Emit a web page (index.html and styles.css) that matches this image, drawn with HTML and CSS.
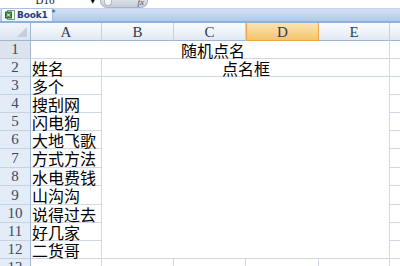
FILE: index.html
```html
<!DOCTYPE html>
<html lang="zh">
<head>
<meta charset="utf-8">
<link rel="stylesheet" href="styles.css">
</head>
<body>
<div class="app">
  <div class="fbar">
    <div class="namebox">D16</div>
    <div class="nbarrow">▼</div>
    <div class="pill"><span class="knob"></span><span class="fx">fx</span></div>
  </div>
  <div class="tabs">
    <div class="tab">
      <svg class="xlicon" width="10" height="10" viewBox="0 0 10 10">
        <rect x="2.5" y="0.5" width="7" height="9" fill="#fff" stroke="#7a9a7a"/>
        <rect x="0.5" y="2" width="6" height="6" fill="#3d8c3d" stroke="#2a6a2a"/>
        <path d="M2 3.5 L5 6.5 M5 3.5 L2 6.5" stroke="#fff" stroke-width="1"/>
      </svg>
      <span class="tabname">Book1</span><span class="star">*</span>
    </div>
  </div>
  <div class="sheet">
    <div class="corner"><span class="tri"></span></div>
    <div class="ch">A</div>
    <div class="ch">B</div>
    <div class="ch">C</div>
    <div class="ch sel">D</div>
    <div class="ch">E</div>
    <div class="ch last"></div>

    <div class="rh dark">1</div>
    <div class="c title">随机点名</div>
    <div class="c f"></div>

    <div class="rh">2</div>
    <div class="c">姓名</div>
    <div class="c hdr">点名框</div>
    <div class="c f"></div>

    <div class="rh">3</div>
    <div class="c">多个</div>
    <div class="c big"></div>
    <div class="c f"></div>

    <div class="rh">4</div>
    <div class="c">搜刮网</div>
    <div class="c f"></div>
    <div class="rh">5</div>
    <div class="c">闪电狗</div>
    <div class="c f"></div>
    <div class="rh">6</div>
    <div class="c">大地飞歌</div>
    <div class="c f"></div>
    <div class="rh">7</div>
    <div class="c">方式方法</div>
    <div class="c f"></div>
    <div class="rh">8</div>
    <div class="c">水电费钱</div>
    <div class="c f"></div>
    <div class="rh">9</div>
    <div class="c">山沟沟</div>
    <div class="c f"></div>
    <div class="rh">10</div>
    <div class="c">说得过去</div>
    <div class="c f"></div>
    <div class="rh">11</div>
    <div class="c">好几家</div>
    <div class="c f"></div>
    <div class="rh">12</div>
    <div class="c">二货哥</div>
    <div class="c f"></div>

    <div class="rh">13</div>
    <div class="c"></div>
    <div class="c"></div>
    <div class="c"></div>
    <div class="c"></div>
    <div class="c"></div>
    <div class="c f"></div>
  </div>
</div>
</body>
</html>
```

FILE: styles.css
```css
* { box-sizing: border-box; }
html, body { margin: 0; padding: 0; background: #fff; }
body { width: 400px; height: 266px; overflow: hidden; }
.app { width: 400px; height: 266px; overflow: hidden; display: flex; flex-direction: column; }
.app > * { flex: none; }

.fbar {
  height: 9px;
  display: flex;
  align-items: flex-end;
  background: #fff;
  border-bottom: 1px solid #c4d5ea;
  overflow: hidden;
}
.namebox {
  width: 90px;
  font: 11px "Liberation Serif", serif;
  color: #222;
  text-align: center;
  line-height: 11px;
  transform: translateY(-2px);
}
.nbarrow {
  font: 7px "DejaVu Sans", sans-serif;
  line-height: 7px;
  color: #000;
  width: 8px;
  margin-bottom: 3px;
}
.pill {
  margin-left: 2px;
  width: 48px;
  height: 11px;
  border-radius: 0 0 7px 7px;
  background: linear-gradient(#e6e9ee, #c5cdd7);
  border: 1px solid #a9b3c1;
  border-top: none;
  display: flex;
  justify-content: space-between;
  align-items: flex-end;
  padding: 0 3px 1px 3px;
  align-self: flex-start;
  margin-top: -3px;
}
.knob { width: 8px; height: 6px; border-radius: 0 0 4px 4px; background: #f4f6f8; border: 1px solid #b0b8c4; border-top: none; }
.fx { font: italic 9px "Liberation Serif", serif; color: #555; line-height: 8px; }

.tabs {
  height: 14px;
  background: linear-gradient(#d2e0f3, #b0c9ea);
  border-bottom: 2px solid #8eb0dc;
  display: flex;
  align-items: flex-end;
  padding-left: 1px;
}
.tab {
  height: 13px;
  width: 52px;
  background: linear-gradient(#ffffff, #eef3fa);
  border: 1px solid #a6bfe2;
  border-bottom: none;
  border-radius: 2px 2px 0 0;
  display: flex;
  align-items: center;
  padding-left: 3px;
  gap: 2px;
}
.xlicon { flex: none; }
.tabname { font: bold 9px "DejaVu Sans", sans-serif; color: #1d3f7a; letter-spacing: -0.2px; }
.star { font: 8px "DejaVu Sans", sans-serif; color: #1d3f7a; margin-left: 2px; margin-top: -3px; }

.sheet {
  display: grid;
  grid-template-columns: 31px 71px 72px 72px 73px 71px 10px;
  grid-template-rows: 18px 18px 18px 18px 18px 18px 18px 19px 18px 19px 18px 18px 18px 18px;
  font-family: "Noto Sans CJK SC", sans-serif;
}
.corner {
  background: linear-gradient(#f2f5fa, #dae3ef);
  border-right: 1px solid #9eb6ce;
  border-bottom: 1px solid #9eb6ce;
  position: relative;
}
.tri {
  position: absolute;
  right: 3px; bottom: 3px;
  width: 0; height: 0;
  border-left: 10px solid transparent;
  border-bottom: 10px solid #c3cfde;
}
.ch {
  background: linear-gradient(#f9fbfd 0%, #eef2f8 55%, #e1e8f2 100%);
  border-right: 1px solid #c5d2e2;
  border-bottom: 1px solid #9eb6ce;
  font: 15px "Liberation Serif", serif;
  color: #2d3c55;
  display: flex;
  align-items: center;
  justify-content: center;
  padding-top: 1px;
}
.ch.sel {
  background: linear-gradient(#fbe3b2 0%, #f8d38c 55%, #f3c46c 100%);
  border: 1px solid #f0a84a;
  border-top: none;
}
.ch.last { border-right: none; }
.rh {
  background: #e4ecf7;
  border-right: 1px solid #9eb6ce;
  border-bottom: 1px solid #c5d2e2;
  font: 15px "Liberation Serif", serif;
  color: #3a4a63;
  display: flex;
  align-items: center;
  justify-content: center;
}
.rh.dark { background: #dce3ed; }
.c {
  border-right: 1px solid #d0d7e5;
  border-bottom: 1px solid #d0d7e5;
  font-size: 16px;
  line-height: 16px;
  color: #000;
  padding-left: 1px;
  white-space: nowrap;
  display: flex;
  align-items: center;
}
.title { grid-column: 2 / 7; justify-content: center; padding-left: 6px; }
.hdr { grid-column: 3 / 7; justify-content: center; }
.big { grid-column: 3 / 7; grid-row: 4 / 14; }
.f { border-right: none; }
```
